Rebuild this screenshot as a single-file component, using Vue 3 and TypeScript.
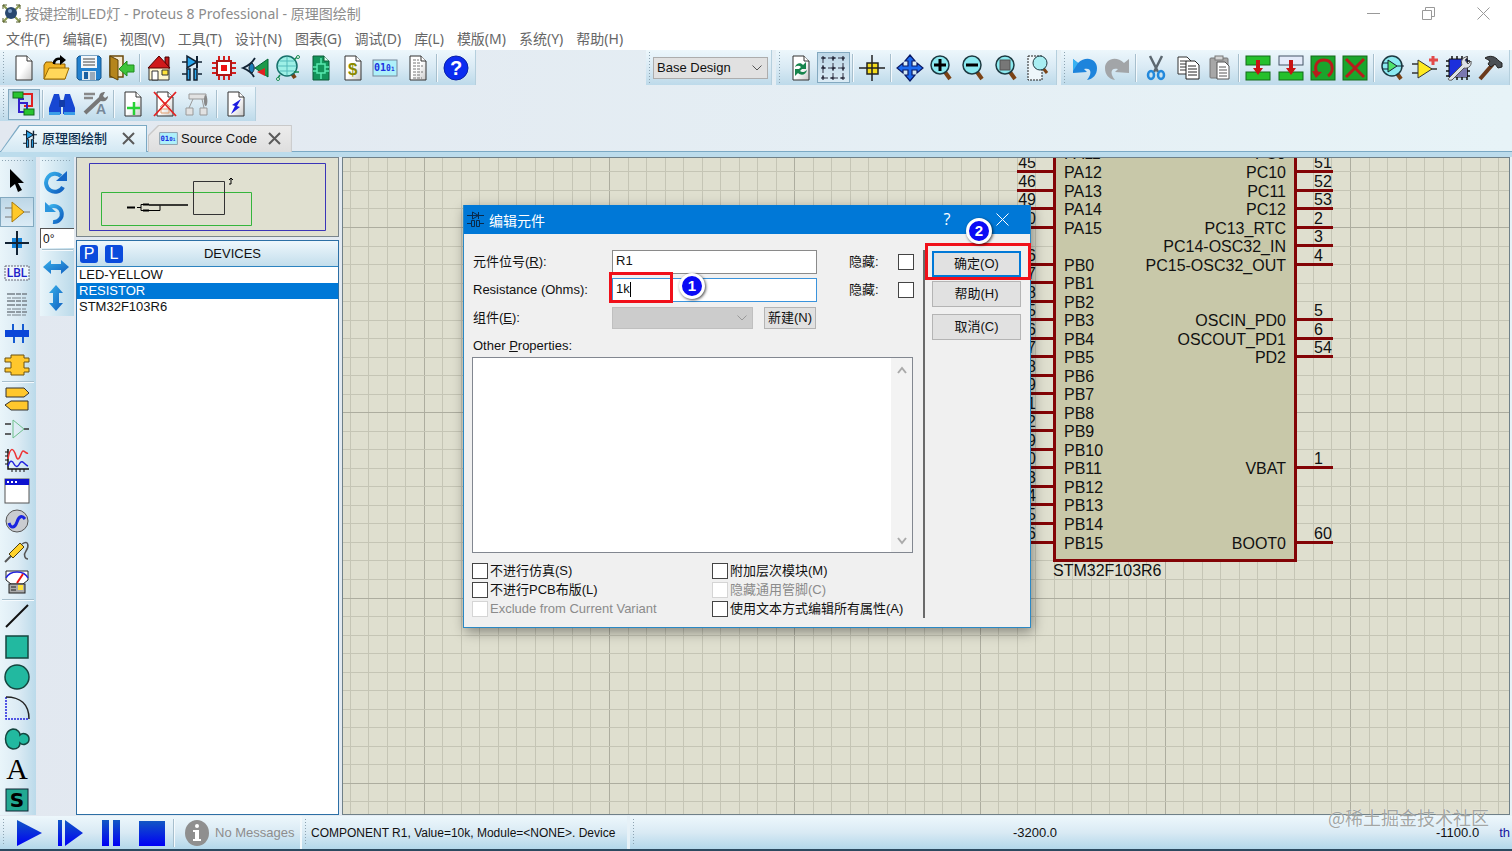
<script setup lang="ts">
import { ref } from 'vue'

interface Tool {
  name: string
  art?: string
  active?: boolean
  sep?: boolean
}

const page = '<path d="M5 1h11l5 5v19H5z" fill="url(#paper)" stroke="#333"/><path d="M16 1v5h5" fill="#fff" stroke="#333"/>'
const part = '<path d="M3 7h20M3 19h5M19 19h4" stroke="#123" stroke-width="1.5"/><path d="M8 1v12l10-6z" fill="#29a5ec" stroke="#123" stroke-width="1.5"/><path d="M18 1v12" stroke="#123" stroke-width="2"/><path d="M8 14h3v11H8zM15 14h3v11h-3z" fill="#29a5ec" stroke="#123" stroke-width="1.5"/>'
const code = '<rect x="1" y="5" width="24" height="16" fill="#aef0fa" stroke="#789"/><text x="2" y="16" font-family="DejaVu Sans Mono" font-weight="bold" font-size="10" fill="#1b32e0">01<tspan font-size="8">0</tspan><tspan font-size="6">1</tspan></text>'
const lens = '<path d="M16 17l5 7" stroke="#7b4316" stroke-width="4"/><circle cx="11" cy="10" r="9" fill="#8beaf0" stroke="#1d3a42" stroke-width="1.5"/>'
const chipGreen = '<rect x="1" y="1" width="24" height="24" fill="#1aa52c" stroke="#126a1b"/>'

const mainTools: Tool[] = [
  { name: 'New', art: page },
  { name: 'Open', art: '<path d="M1 10V24h21V9H11L9 7H3z" fill="#f0b323" stroke="#8a5a00"/><path d="M1 24l5-11h20l-4 11z" fill="#ffd75a" stroke="#9a6a00"/><path d="M11 9c0-4 3-6 7-5" fill="none" stroke="#000" stroke-width="2.5"/><path d="M17 0l6 5-6 5z"/>' },
  { name: 'Save', art: '<path d="M1 3l2-2h20l2 2v20l-2 2H3l-2-2z" fill="#2381cf" stroke="#15568e"/><rect x="5" y="1" width="16" height="12" fill="#f4f8fb"/><path d="M7 4h12M7 7h12M7 10h12" stroke="#444"/><rect x="6" y="16" width="14" height="9" fill="#dfe8ee"/><rect x="8" y="17" width="4" height="7" fill="#1b5fa0"/><path d="M14 17h5v8h-5z" fill="#9ab"/>' },
  { name: 'Close project', art: '<path d="M2 1h13v21H2z" fill="#f5ead0" stroke="#6b4a0a" stroke-width="1.5"/><path d="M2 1l8 4v20l-8-4z" fill="#b5851d" stroke="#5d420c"/><path d="M26 10v7h-7v4l-8-7 8-8v4z" fill="#3ec43a" stroke="#1f8d1e"/>' },
  { name: 's1', sep: true },
  { name: 'Home', art: '<path d="M19 9V2h4v10" fill="#c01818" stroke="#400"/><path d="M3 12h20v13H3z" fill="#fff6cf" stroke="#333"/><path d="M13 1L2 13h22z" fill="#d01a1a" stroke="#500"/><path d="M6 16h6v9H6z" fill="#fff" stroke="#333"/><path d="M16 15h6v5h-6z" fill="#ffe23a" stroke="#333"/>' },
  { name: 'Schematic', art: part },
  { name: 'PCB', art: '<path d="M8 1v24M13 1v24M18 1v24M1 8h24M1 13h24M1 18h24" stroke="#d3201f" stroke-width="2"/><rect x="6" y="6" width="14" height="14" fill="#fff" stroke="#b01515" stroke-width="2"/><rect x="10" y="10" width="6" height="6" fill="#e11"/>' },
  { name: '3D viewer', art: '<path d="M12 3C9 8 5 11 0 13c5 2 9 5 11 9" fill="none" stroke="#123" stroke-width="1.8"/><path d="M9 8c3 3 3 7 0 10-4-2-4-8 0-10z" fill="#1b7cb8" stroke="#123"/><path d="M12 13L25 4v18z" fill="#1e9a4a" stroke="#063"/><path d="M14 17l8-4v8z" fill="#e02222"/>' },
  { name: 'Gerber', art: '<path d="M16 17l4 6" stroke="#7b4316" stroke-width="4"/><circle cx="12" cy="11" r="10" fill="#9df0e6" stroke="#16706b" stroke-width="1.5"/><path d="M3 11h18M12 2v18M5 6h14M5 16h14" stroke="#5bb" fill="none"/><path d="M19 5l3-3M19 17h5M5 20l-2 3" stroke="#178a50" stroke-width="1.5"/><circle cx="23" cy="2" r="1.5" fill="#fff" stroke="#178a50"/><circle cx="3" cy="24" r="1.5" fill="#fff" stroke="#178a50"/>' },
  { name: 'Design explorer', art: '<path d="M5 1h11l5 5v19H5z" fill="#12945a" stroke="#0c5a38"/><path d="M16 1v5h5" fill="#e0fff0" stroke="#0c5a38"/><path d="M9 9h8v9H9zM13 9V3M13 18v6M9 12H5M9 16H5M17 12h4M17 16h4" fill="none" stroke="#59e8b0" stroke-width="1.5"/>' },
  { name: 'Bill of materials', art: page + '<text x="8" y="20" font-family="Liberation Sans" font-weight="bold" font-size="17" fill="#8a8a00">$</text>' },
  { name: 'Source', art: code },
  { name: 'Notes', art: page + '<path d="M8 5h6M8 8h7M8 11h10M8 14h8M8 17h10M8 20h7M8 23h9" stroke="#777" stroke-dasharray="3 1"/>' },
  { name: 's2', sep: true },
  { name: 'Help', art: '<circle cx="13" cy="13" r="12" fill="#0b2cf0" stroke="#0820a8"/><text x="13" y="20" text-anchor="middle" font-family="Liberation Sans" font-weight="bold" font-size="20" fill="#fff">?</text>' },
]

const viewTools: Tool[] = [
  { name: 'Redraw', art: page + '<path d="M7 12c1-4 6-5 8-2l3-3v7h-7l2-2c-2-2-4-1-6 0zM19 15c-1 5-6 6-9 3l-3 3v-7h7l-2 2c2 2 5 1 7-1z" fill="#16844c"/>' },
  { name: 'Grid', active: true, art: '<path d="M3 3h20v20H3zM13 3v20M3 13h20" fill="none" stroke="#334" stroke-dasharray="3 2"/><path d="M1 3h4M11 3h4M21 3h4M1 13h4M11 13h4M21 13h4M1 23h4M11 23h4M21 23h4M3 1v4M13 1v4M23 1v4M3 11v4M13 11v4M23 11v4M3 21v4M13 21v4M23 21v4" stroke="#112"/>' },
  { name: 's1', sep: true },
  { name: 'Origin', art: '<rect x="8" y="8" width="11" height="11" fill="#f5dc1b" stroke="#222" stroke-width="1.5"/><path d="M13 0v26M0 13h26" stroke="#222" stroke-width="1.5"/>' },
  { name: 's2', sep: true },
  { name: 'Pan', art: '<path d="M13 0l5 6h-3v5h5V8l6 5-6 5v-3h-5v5h3l-5 6-5-6h3v-5H6v3l-6-5 6-5v3h5V6H8z" fill="#1d6af0" stroke="#0a1a66" stroke-width="1.2"/>' },
  { name: 'Zoom in', art: lens + '<path d="M5 10h12M11 4v12" stroke="#000" stroke-width="3"/>' },
  { name: 'Zoom out', art: lens + '<path d="M5 10h12" stroke="#000" stroke-width="3"/>' },
  { name: 'Zoom all', art: lens + '<rect x="6" y="5" width="10" height="10" fill="#777" stroke="#555"/>' },
  { name: 'Zoom area', art: '<path d="M2 1h14v24H2z" fill="#eef6fa" stroke="#222" stroke-dasharray="2 1"/><path d="M17 13l4 5" stroke="#7b4316" stroke-width="3"/><circle cx="14" cy="8" r="7" fill="#a8eef2" stroke="#1d3a42"/>' },
]

const editTools: Tool[] = [
  { name: 'Undo', art: '<path d="M1 4l5 4c8-8 19-4 19 5 0 7-4 11-10 12 5-6 5-13-3-11l3 3L1 18z" fill="#1d84dc"/><path d="M1 4l5 4-5 8z" fill="#38b2f2"/>' },
  { name: 'Redo', art: '<path d="M25 4l-5 4C12 0 1 4 1 13c0 7 4 11 10 12-5-6-5-13 3-11l-3 3 14 1z" fill="#a2a5a8"/>' },
  { name: 's1', sep: true },
  { name: 'Cut', art: '<path d="M7 1l8 16M19 1l-8 16" stroke="#5d6870" stroke-width="2.5"/><ellipse cx="8" cy="20" rx="3" ry="4" fill="none" stroke="#2389dc" stroke-width="2.5"/><ellipse cx="18" cy="20" rx="3" ry="4" fill="none" stroke="#2389dc" stroke-width="2.5"/>' },
  { name: 'Copy', art: '<path d="M3 2h9l4 4v13H3z" fill="#fff" stroke="#333"/><path d="M5 6h6M5 9h7M5 12h6M5 15h7" stroke="#333"/><path d="M11 6h9l4 4v14H11z" fill="#fff" stroke="#222"/><path d="M13 11h8M13 14h9M13 17h9M13 20h9" stroke="#222"/>' },
  { name: 'Paste', art: '<rect x="3" y="3" width="18" height="20" rx="1" fill="#a7a7a7" stroke="#777"/><rect x="8" y="1" width="8" height="4" fill="#d5d5d5" stroke="#777"/><path d="M10 7h8l4 4v13H10z" fill="#fff" stroke="#555"/><path d="M12 12h7M12 15h8M12 18h8M12 21h8" stroke="#555"/>' },
  { name: 's2', sep: true },
  { name: 'Block copy', art: '<rect x="1" y="1" width="24" height="9" fill="#25c02c" stroke="#126a1b"/><rect x="1" y="17" width="24" height="8" fill="#25c02c" stroke="#126a1b"/><path d="M13 5v9" stroke="#c81414" stroke-width="4"/><path d="M8 13h10l-5 7z" fill="#c81414"/>' },
  { name: 'Block move', art: '<rect x="1" y="1" width="24" height="9" fill="#e4ebfa" stroke="#456"/><rect x="1" y="17" width="24" height="8" fill="#25c02c" stroke="#126a1b"/><path d="M13 5v9" stroke="#c81414" stroke-width="4"/><path d="M8 13h10l-5 7z" fill="#c81414"/>' },
  { name: 'Block rotate', art: chipGreen + '<path d="M18 21c7-5 5-16-4-16-8 0-10 7-7 13" fill="none" stroke="#b81c1c" stroke-width="3"/><path d="M2 16l10 1-6 6z" fill="#b81c1c"/>' },
  { name: 'Block delete', art: chipGreen + '<path d="M4 4l18 18M22 4L4 22" stroke="#b81c1c" stroke-width="3"/>' },
  { name: 's3', sep: true },
  { name: 'Pick parts', art: '<path d="M16 17l5 7" stroke="#7b4316" stroke-width="4"/><circle cx="12" cy="11" r="10" fill="#8beaf0" stroke="#1d3a42" stroke-width="1.5"/><path d="M2 8h6M2 14h6M17 11h7" stroke="#123"/><path d="M8 5v12l9-6z" fill="#4de36a" stroke="#123"/>' },
  { name: 'Make device', art: '<path d="M0 9h6M0 18h6M18 14h7" stroke="#333" stroke-width="1.5"/><path d="M6 5v18l14-9z" fill="#ffea20" stroke="#333"/><path d="M17 5h9M21 1v9" stroke="#e24a4a" stroke-width="3"/>' },
  { name: 'Packaging', art: '<path d="M7 1v24M12 1v24M17 1v24M22 1v24M1 6h24M1 11h24M1 16h24M1 21h24" stroke="#111" stroke-width="1.5"/><path d="M4 4h18v18H4z" fill="#1c2fdc" stroke="#111"/><path d="M22 8v14H8z" fill="#7a78b0"/><path d="M4 23l13-13c-2-5 2-9 6-8l-3 3 3 4 3-3c1 5-3 8-7 7L7 25c-3 1-5-1-3-2z" fill="#dde1e6" stroke="#555"/>' },
  { name: 'Decompose', art: '<path d="M3 24L16 9" stroke="#6b3a1c" stroke-width="4"/><path d="M8 3c5-3 10-2 14 3l3 2v4l-4 1-3-4-4 3-3-3 2-3c-2-1-3-2-5-3z" fill="#4a4f54" stroke="#222"/>' },
]

const designTools: Tool[] = [
  { name: 'Wire autorouter', active: true, art: '<path d="M12 3h9v12h-8" fill="none" stroke="#e02020" stroke-width="2"/><path d="M13 8H8v13h6M16 18v-6h-7" fill="none" stroke="#3322cc" stroke-width="2"/><rect x="2" y="1" width="10" height="6" fill="#28c430" stroke="#126a1b"/><rect x="13" y="18" width="10" height="6" fill="#28c430" stroke="#126a1b"/>' },
  { name: 's1', sep: true },
  { name: 'Search', art: '<path d="M5 3h5l2 8v12H0v-6zM21 3h-5l-2 8v12h12v-6z" fill="#1747d2"/><path d="M10 9h6v7h-6z" fill="#123ba8"/><path d="M0 21h11v3H0zM15 21h11v3H15z" fill="#3a9de8"/>' },
  { name: 'Properties', art: '<path d="M2 3h11M2 7h9" stroke="#888" stroke-width="2.5"/><path d="M3 22L19 7" stroke="#777" stroke-width="4"/><path d="M17 7c0-4 2-6 6-6l-2 4 2 2 3-2c0 4-3 6-7 5z" fill="#777"/><text x="14" y="23" font-family="Liberation Sans" font-weight="bold" font-size="14" fill="#789">A</text>' },
  { name: 's2', sep: true },
  { name: 'New sheet', art: page + '<path d="M7 17h13M14 11v13" stroke="#27d235" stroke-width="2.5"/>' },
  { name: 'Remove sheet', art: page + '<path d="M8 16l5-5 5 5M9 18h8v4H9z" fill="none" stroke="#e4a070"/><path d="M2 1l22 24M24 1L2 25" stroke="#e32222" stroke-width="1.8"/>' },
  { name: 'Parent sheet', art: '<path d="M4 3h17v5H4zM1 17h7v7H1zM15 17h7v7h-7zM8 8l-4 9M17 8l2 9" fill="#e2e2e2" stroke="#999"/><path d="M20 4c3 0 3 10 1 11s-3-7-1-11z" fill="#888"/>' },
  { name: 's3', sep: true },
  { name: 'Electrical check', art: page + '<path d="M18 8l-9 6 3 1-4 8 9-7-3-1z" fill="#1c1ce0"/>' },
]

const modes: Tool[] = [
  { name: 'Selection', art: '<path d="M6 1v19l5-4 3 8 4-2-4-7h6z"/>' },
  { name: 'Component', active: true, art: '<path d="M1 9h7M1 18h7M20 13h6" stroke="#777"/><path d="M8 3v20l12-10z" fill="#ffc92a" stroke="#a77a10"/>' },
  { name: 'Junction', art: '<rect x="8" y="8" width="10" height="10" fill="#1583d8"/><path d="M13 1v24M1 13h24" stroke="#123" stroke-width="2"/>' },
  { name: 'Wire label', art: '<rect x="1" y="6" width="24" height="14" fill="#edf6fc" stroke="#667" stroke-dasharray="2 1"/><text x="13" y="17" text-anchor="middle" font-family="Roboto" font-weight="500" font-size="12" fill="#1d22c8">LBL</text>' },
  { name: 'Text script', art: '<path d="M3 3h20M3 10h20M3 14h20M3 21h20" stroke="#778088" stroke-width="1.5" stroke-dasharray="8 1 5 1"/><path d="M3 7h20M3 18h20M3 24h20" stroke="#778088" stroke-dasharray="4 1 9 1"/>' },
  { name: 'Bus', art: '<path d="M9 3v10M19 3v10M10 13v9M19 13v9" stroke="#155bd2" stroke-width="2"/><rect x="1" y="9" width="24" height="7" fill="#0b46d8"/>' },
  { name: 'Subcircuit', art: '<path d="M1 6h6V3h13v3h5v4h-5v6h5v4h-5v3H7v-3H1v-4h6v-6H1z" fill="#ffc72c" stroke="#6d5310"/>' },
  { name: 's1', sep: true },
  { name: 'Terminal', art: '<path d="M2 2h18l5 5-5 4H2zM24 15H7l-6 4 6 5h17z" fill="#ffc72c" stroke="#333"/>' },
  { name: 'Device pin', art: '<path d="M9 4v18l11-9z" fill="none" stroke="#6fc08d"/><path d="M1 8h6M1 18h6M20 13h5" stroke="#333" stroke-width="1.5"/>' },
  { name: 'Graph', art: '<path d="M4 2v20h21" fill="none" stroke="#111" stroke-width="1.5"/><path d="M1 5h3M1 9h3M1 13h3M1 17h3M8 22v3M12 22v3M16 22v3M20 22v3" stroke="#111"/><path d="M4 12c2-12 5-12 8-3s5-5 7-5 3 3 5 2" fill="none" stroke="#e33" stroke-width="1.5"/><path d="M4 19c2-6 4-6 6-2s4 3 6-1 5 2 8 3" fill="none" stroke="#22d" stroke-width="1.5"/>' },
  { name: 'Popup', art: '<rect x="1" y="1" width="24" height="24" fill="#fff" stroke="#555"/><rect x="1" y="1" width="24" height="6" fill="#0d12cf"/><path d="M3 4h2M7 4h2M11 4h2" stroke="#fff" stroke-width="2"/>' },
  { name: 'Generator', art: '<circle cx="13" cy="13" r="11" fill="#c9ccd0" stroke="#555"/><path d="M5 15c2 6 6 5 8-1s5-7 8-3" fill="none" stroke="#1a25e0" stroke-width="3"/>' },
  { name: 'Probe', art: '<path d="M1 23l6-6" stroke="#555" stroke-width="2"/><path d="M5 15L16 4l4 4L9 19z" fill="#ffd22c" stroke="#4d3f10"/><path d="M18 5c7-5 7 3 4 7s-1 8 2 8" fill="none" stroke="#555" stroke-width="1.5"/>' },
  { name: 'Instrument', art: '<path d="M2 2h22v9l-5 4H7l-5-4z" fill="#fff" stroke="#222"/><path d="M2 9c4-8 18-8 22 0" fill="none" stroke="#22d" stroke-width="1.5"/><path d="M13 14l6-9" stroke="#e11" stroke-width="2"/><rect x="5" y="15" width="16" height="9" fill="#aaa" stroke="#222"/><path d="M7 18h5M7 21h5" stroke="#222"/><rect x="14" y="16" width="5" height="5" fill="#ffe23a"/>' },
  { name: 's2', sep: true },
  { name: 'Line', art: '<path d="M2 24L24 2" stroke="#111" stroke-width="2"/>' },
  { name: 'Box', art: '<rect x="2" y="2" width="22" height="22" fill="#22b9a0" stroke="#14463f" stroke-width="1.5"/>' },
  { name: 'Circle', art: '<circle cx="13" cy="13" r="12" fill="#22b9a0" stroke="#14463f" stroke-width="1.5"/>' },
  { name: 'Arc', art: '<path d="M2 2v22h23" fill="none" stroke="#22d" stroke-width="1.5" stroke-dasharray="2 1"/><path d="M2 2c14 0 23 7 23 22" fill="none" stroke="#222" stroke-width="1.5"/>' },
  { name: 'Path', art: '<path d="M9 3c5 0 7 4 7 6 3-3 9-1 9 4s-6 7-9 4c0 3-2 6-7 6-10-1-10-19 0-20z" fill="#22b9a0" stroke="#14463f" stroke-width="1.5"/>' },
  { name: 'Text', art: '<text x="13" y="23" text-anchor="middle" font-family="Liberation Serif" font-size="30">A</text>' },
  { name: 'Symbol', art: '<rect x="2" y="2" width="22" height="22" fill="#22a992" stroke="#123"/><text x="13" y="20" text-anchor="middle" font-family="DejaVu Sans" font-weight="bold" font-size="20">S</text>' },
]

const menus = ['文件(F)', '编辑(E)', '视图(V)', '工具(T)', '设计(N)', '图表(G)', '调试(D)', '库(L)', '模版(M)', '系统(Y)', '帮助(H)']
const devices = ['LED-YELLOW', 'RESISTOR', 'STM32F103R6']
const selected = ref('RESISTOR')
const design = ref('Base Design')
const angle = ref('0°')
const reference = ref('R1')
const resistance = ref('1k')
const otherProps = ref('')

const flags = [
  { id: 'sim', label: '不进行仿真(S)', off: false },
  { id: 'hier', label: '附加层次模块(M)', off: false },
  { id: 'pcb', label: '不进行PCB布版(L)', off: false },
  { id: 'pins', label: '隐藏通用管脚(C)', off: true },
  { id: 'variant', label: 'Exclude from Current Variant', off: true },
  { id: 'astext', label: '使用文本方式编辑所有属性(A)', off: false },
]

/* Schematic geometry: one grid step between neighbouring pins. */
const STEP = 18.525
const at = (base: number, k: number) => Math.round(base + k * STEP)
const columns = Array.from({ length: 140 }, (_, i) => i - 54).map(k => ({ p: at(1007, k), major: k % 10 === 0 }))
const rows = Array.from({ length: 80 }, (_, i) => i - 3).map(k => ({ p: at(69, k), major: k % 10 === 0 }))

const leftPins: [number, string, string][] = [
  [-1, '', 'PA11'], [0, '45', 'PA12'], [1, '46', 'PA13'], [2, '49', 'PA14'], [3, '50', 'PA15'],
  [5, '26', 'PB0'], [6, '27', 'PB1'], [7, '28', 'PB2'], [8, '55', 'PB3'], [9, '56', 'PB4'], [10, '57', 'PB5'],
  [11, '58', 'PB6'], [12, '59', 'PB7'], [13, '61', 'PB8'], [14, '62', 'PB9'], [15, '29', 'PB10'], [16, '30', 'PB11'],
  [17, '33', 'PB12'], [18, '34', 'PB13'], [19, '35', 'PB14'], [20, '36', 'PB15'],
]
const rightPins: [number, string, string][] = [
  [-1, '', 'PC9'], [0, '51', 'PC10'], [1, '52', 'PC11'], [2, '53', 'PC12'], [3, '2', 'PC13_RTC'],
  [4, '3', 'PC14-OSC32_IN'], [5, '4', 'PC15-OSC32_OUT'], [8, '5', 'OSCIN_PD0'], [9, '6', 'OSCOUT_PD1'],
  [10, '54', 'PD2'], [16, '1', 'VBAT'], [20, '60', 'BOOT0'],
]
</script>

<template>
  <div class="app">
    <svg class="defs" width="0" height="0" aria-hidden="true">
      <defs>
        <linearGradient id="paper" x1="0" y1="0" x2="1" y2="1"><stop offset=".5" stop-color="#fff" /><stop offset="1" stop-color="#c8c8c8" /></linearGradient>
        <linearGradient id="run" x1="0" y1="0" x2="0" y2="1"><stop offset="0" stop-color="#1257c4" /><stop offset="1" stop-color="#0000f5" /></linearGradient>
        <linearGradient id="flip" x1="0" y1="0" x2="1" y2="1"><stop offset="0" stop-color="#38b0ea" /><stop offset="1" stop-color="#0f5fc0" /></linearGradient>
      </defs>
    </svg>

    <header class="titlebar">
      <svg width="19" height="19" viewBox="0 0 19 19" aria-hidden="true">
        <path d="M1 1l17 17M18 1L1 18" stroke="#8b9a50" stroke-width="2" />
        <circle cx="9" cy="9" r="6" fill="#28476f" /><circle cx="8" cy="7" r="2" fill="#7fa0c8" />
        <path d="M1 5V1h4M14 1h4v4M1 14v4h4M18 14v4h-4" fill="none" stroke="#555f30" />
      </svg>
      <h1>按键控制LED灯 - Proteus 8 Professional - 原理图绘制</h1>
      <div class="win">
        <button aria-label="Minimize"><svg width="13" height="13"><path d="M0 6.500h13" stroke="#999" /></svg></button>
        <button aria-label="Restore"><svg width="13" height="13" fill="none" stroke="#999"><path d="M.5 3.500h9v9h-9zM3.500 3V.5h9v9H10" /></svg></button>
        <button aria-label="Close"><svg width="13" height="13" stroke="#999"><path d="M.5.5l12 12M12.500.5l-12 12" /></svg></button>
      </div>
    </header>

    <nav class="menubar">
      <button v-for="m in menus" :key="m">{{ m }}</button>
    </nav>

    <div class="bars">
      <div class="bar main" role="toolbar" aria-label="Project">
        <template v-for="t in mainTools" :key="t.name">
          <i v-if="t.sep" class="sep"></i>
          <button v-else class="tool" :aria-label="t.name"><svg viewBox="0 0 26 26" fill="#000" v-html="t.art"></svg></button>
        </template>
      </div>
      <div class="bar combo">
        <div class="pick">
          <select v-model="design" aria-label="Variant"><option>Base Design</option></select>
          <svg width="10" height="6" fill="none" stroke="#555"><path d="M.5.5L5 5 9.500.5" /></svg>
        </div>
      </div>
      <div class="bar view" role="toolbar" aria-label="View">
        <template v-for="t in viewTools" :key="t.name">
          <i v-if="t.sep" class="sep"></i>
          <button v-else class="tool" :class="{ active: t.active }" :aria-label="t.name"><svg viewBox="0 0 26 26" v-html="t.art"></svg></button>
        </template>
      </div>
      <div class="bar edit" role="toolbar" aria-label="Edit">
        <template v-for="t in editTools" :key="t.name">
          <i v-if="t.sep" class="sep"></i>
          <button v-else class="tool" :aria-label="t.name"><svg viewBox="0 0 26 26" v-html="t.art"></svg></button>
        </template>
      </div>
    </div>
    <div class="bars second">
      <div class="bar design" role="toolbar" aria-label="Design">
        <template v-for="t in designTools" :key="t.name">
          <i v-if="t.sep" class="sep"></i>
          <button v-else class="tool" :class="{ active: t.active }" :aria-label="t.name"><svg viewBox="0 0 26 26" v-html="t.art"></svg></button>
        </template>
      </div>
    </div>

    <div class="tabs">
      <div class="tab on">
        <svg width="18" height="20" viewBox="0 0 26 26" v-html="part"></svg>
        <button class="name">原理图绘制</button>
        <button class="x" aria-label="Close tab"><svg width="13" height="13" stroke="#5a5a5a" stroke-width="2"><path d="M1 1l11 11M12 1L1 12" /></svg></button>
      </div>
      <div class="tab">
        <svg width="19" height="19" viewBox="0 0 26 26" v-html="code"></svg>
        <button class="name">Source Code</button>
        <button class="x" aria-label="Close tab"><svg width="13" height="13" stroke="#5a5a5a" stroke-width="2"><path d="M1 1l11 11M12 1L1 12" /></svg></button>
      </div>
    </div>

    <main class="work">
      <div class="modes" role="toolbar" aria-label="Modes">
        <template v-for="t in modes" :key="t.name">
          <i v-if="t.sep" class="hsep"></i>
          <button v-else class="tool" :class="{ active: t.active }" :aria-label="t.name"><svg viewBox="0 0 26 26" v-html="t.art"></svg></button>
        </template>
      </div>

      <div class="orient">
        <button aria-label="Rotate clockwise"><svg width="24" height="24"><path d="M19 17a9 9 0 1 1-2-11" fill="none" stroke="url(#flip)" stroke-width="4" /><path d="M23 1v10H12z" fill="#1668c8" /></svg></button>
        <button aria-label="Rotate anticlockwise"><svg width="24" height="24"><path d="M6 6a8 8 0 1 1 3 15" fill="none" stroke="url(#flip)" stroke-width="4" /><path d="M1 1v10h11z" fill="#2b96de" /></svg></button>
        <input v-model="angle" aria-label="Angle" />
        <i class="hsep"></i>
        <button aria-label="Mirror horizontally"><svg width="26" height="14"><path d="M0 7l8-7v4h10V0l8 7-8 7v-4H8v4z" fill="url(#flip)" /></svg></button>
        <button aria-label="Mirror vertically"><svg width="14" height="26"><path d="M7 0l7 8h-4v10h4l-7 8-7-8h4V8H0z" fill="url(#flip)" /></svg></button>
      </div>

      <aside class="side">
        <div class="preview">
          <svg viewBox="0 0 261 78" fill="none" aria-hidden="true">
            <path d="M12.500 5.500h236v67h-236z" stroke="#3a35b8" />
            <path d="M24.500 34.500h150v33h-150z" stroke="#35b53c" />
            <path d="M116.500 23.500h31v33h-31z" stroke="#333" />
            <path d="M50 49.500h8M66 46.500h6M66 52.500h6" stroke="#000" stroke-width="2" />
            <path d="M60 49.500h4M66 46.500h-2v6h2M72 52.500h11v-5" stroke="#000" />
            <path d="M72 47h39" stroke="#000" stroke-width="1.500" />
            <path d="M152 26h2v-5M152 22l2-2 2 2" stroke="#000" />
          </svg>
        </div>
        <section class="devices">
          <div class="dhead">
            <button>P</button><button>L</button><h2>DEVICES</h2>
          </div>
          <ul>
            <li v-for="d in devices" :key="d"><button :class="{ on: d === selected }" @click="selected = d">{{ d }}</button></li>
          </ul>
        </section>
      </aside>

      <div class="canvas">
        <svg width="100%" height="100%" shape-rendering="crispEdges">
          <line v-for="c in columns" :key="'c' + c.p" :x1="c.p" :x2="c.p" y1="0" y2="1500" transform="translate(.5 0)" :stroke="c.major ? '#adad9f' : '#c5c5b5'" />
          <line v-for="r in rows" :key="'r' + r.p" :y1="r.p" :y2="r.p" x1="0" x2="2600" transform="translate(0 .5)" :stroke="r.major ? '#adad9f' : '#c5c5b5'" />
          <rect x="711" y="-20" width="241" height="422" fill="#c8c8a9" stroke="#830406" stroke-width="3" />
          <g v-for="[k, num, label] in leftPins" :key="label">
            <rect x="674" :y="at(12, k)" width="37" height="3" fill="#830406" />
            <text v-if="num" x="693" :y="at(10, k)" text-anchor="end">{{ num }}</text>
            <text x="721" :y="at(20, k)">{{ label }}</text>
          </g>
          <g v-for="[k, num, label] in rightPins" :key="label">
            <rect x="952" :y="at(12, k)" width="38" height="3" fill="#830406" />
            <text v-if="num" x="971" :y="at(10, k)">{{ num }}</text>
            <text x="943" :y="at(20, k)" text-anchor="end">{{ label }}</text>
          </g>
          <text x="710" y="418">STM32F103R6</text>
        </svg>
      </div>
    </main>

    <footer class="status">
      <div class="run">
        <button aria-label="Play"><svg width="26" height="26"><path d="M1 0l25 13L1 26z" fill="url(#run)" /></svg></button>
        <button aria-label="Step"><svg width="26" height="26"><path d="M1 0h4v26H1zM8 0l18 13L8 26z" fill="url(#run)" /></svg></button>
        <button aria-label="Pause"><svg width="26" height="26"><path d="M4 0h7v26H4zM15 0h7v26h-7z" fill="url(#run)" /></svg></button>
        <button aria-label="Stop"><svg width="26" height="26"><path d="M0 1h26v25H0z" fill="url(#run)" /></svg></button>
        <i class="sep"></i>
        <svg width="24" height="26" viewBox="0 0 24 26" aria-hidden="true"><ellipse cx="12" cy="13" rx="12" ry="13" fill="#8f8f8f" /><circle cx="12" cy="6" r="2" fill="#fff" /><path d="M8 10h6v9h2v2H8v-2h2v-7H8z" fill="#fff" /></svg>
        <span>No Messages</span>
      </div>
      <div class="msg">COMPONENT R1, Value=10k, Module=&lt;NONE&gt;. Device</div>
      <div class="coords"><span>-3200.0</span><span>-1100.0</span><b>th</b></div>
    </footer>

    <div class="mark">@稀土掘金技术社区</div>

    <form class="dialog" role="dialog" aria-labelledby="dlg" @submit.prevent>
      <div class="dtitle">
        <svg width="17" height="17" viewBox="0 0 17 17" fill="none" stroke="#0a2a4c"><path d="M0 4.500h17M5.500 1v7l6-3.500zM11.500 1v7M0 12.500h4.500M12.500 12.500H17M4.500 9.500h3v6h-3zM9.500 9.500h3v6h-3z" /></svg>
        <h2 id="dlg">编辑元件</h2>
        <button type="button" aria-label="Help">?</button>
        <button type="button" aria-label="Close"><svg width="13" height="13" stroke="#fff"><path d="M.5.5l12 12M12.500.5l-12 12" /></svg></button>
      </div>
      <div class="dbody">
        <div class="fields">
          <div class="grid">
            <label for="ref">元件位号(<u>R</u>):</label>
            <input id="ref" v-model="reference" />
            <label class="hide">隐藏: <input type="checkbox" /></label>
            <label for="res">Resistance (Ohms):</label>
            <div class="hot">
              <input id="res" v-model="resistance" class="focus" />
              <i class="caret"></i>
              <i class="box"></i>
              <span class="badge">1</span>
            </div>
            <label class="hide">隐藏: <input type="checkbox" /></label>
            <label for="elem">组件(<u>E</u>):</label>
            <div class="pair">
              <div class="pick off">
                <select id="elem" disabled><option></option></select>
                <svg width="10" height="6" fill="none" stroke="#999"><path d="M.5.5L5 5 9.500.5" /></svg>
              </div>
              <button type="button" class="push">新建(N)</button>
            </div>
          </div>
          <label for="other" class="olabel">Other <u>P</u>roperties:</label>
          <div class="memo">
            <textarea id="other" v-model="otherProps"></textarea>
            <div class="scroll">
              <button type="button" aria-label="Scroll up"><svg width="10" height="8" fill="none" stroke="#aaa" stroke-width="2"><path d="M1 7l4-5 4 5" /></svg></button>
              <button type="button" aria-label="Scroll down"><svg width="10" height="8" fill="none" stroke="#aaa" stroke-width="2"><path d="M1 1l4 5 4-5" /></svg></button>
            </div>
          </div>
          <div class="flags">
            <label v-for="f in flags" :key="f.id" :class="{ off: f.off }"><input type="checkbox" :disabled="f.off" />{{ f.label }}</label>
          </div>
        </div>
        <div class="actions">
          <div class="ok">
            <button type="submit" class="push default">确定(O)</button>
            <i class="box"></i>
            <span class="badge">2</span>
          </div>
          <button type="button" class="push">帮助(H)</button>
          <button type="button" class="push">取消(C)</button>
        </div>
      </div>
    </form>
  </div>
</template>

<style>
body { overflow: hidden; }
</style>

<style scoped>
.app {
  position: relative;
  display: flex;
  flex-direction: column;
  height: 100vh;
  background: linear-gradient(90deg, #e2e8f0, #e7f3f7);
  font: 13px/16px "Liberation Sans", "Noto Sans CJK SC", sans-serif;
  color: #111;
  overflow: hidden;
}
.app *, .app *::before, .app *::after { box-sizing: border-box; }
.defs { position: absolute; }
button, input, select, textarea { font: inherit; color: inherit; margin: 0; padding: 0; border: 0; border-radius: 0; background: none; outline: 0; }
h1, h2 { margin: 0; font-weight: 400; }
svg { display: block; flex: none; }

.titlebar { display: flex; align-items: center; gap: 4px; height: 27px; padding: 0 1px 0 2px; background: #fff; flex: none; }
.titlebar h1 { font: 14px/20px "Noto Sans", "Noto Sans CJK SC", sans-serif; color: #8c8c8c; }
.win { display: flex; margin-left: auto; }
.win button { display: grid; place-items: center; width: 55px; height: 27px; }

.menubar { display: flex; gap: 13px; height: 23px; padding: 0 6px; background: #fff; flex: none; }
.menubar button { font: 14px/22px "Noto Sans", "Noto Sans CJK SC", sans-serif; color: #666; white-space: nowrap; }

.bars { display: flex; gap: 4px; height: 35px; padding-right: 2px; flex: none; }
.bars.second { margin-top: 2px; height: 34px; }
.bar {
  position: relative;
  display: flex;
  align-items: center;
  padding: 0 3px 0 8px;
  background: linear-gradient(#edf7fc, #d9eaf4 50%, #bddaea);
  border-right: 1px solid #b5cfdd;
}
.bar::before {
  content: "";
  position: absolute;
  left: 3px; top: 2px; bottom: 2px;
  width: 1px;
  background: repeating-linear-gradient(#8da4b2 0 1px, transparent 1px 3px);
}
.main { width: 476px; }
.combo { width: 126px; margin-left: auto; }
.view { width: 281px; padding: 0 1px 0 9px; }
.edit { width: 449px; }
.design { width: 256px; }
.tool { display: grid; place-items: center; flex: 1 1 0; min-width: 0; min-height: 0; height: 31px; }
.tool svg { width: 26px; height: 26px; overflow: visible; }
.tool.active { background: linear-gradient(#bcd6e6, #dcecf6); box-shadow: inset 0 0 0 1px #83a9c0; }
.sep { width: 2px; height: 28px; margin: 0 2px; background: #a7bfcd; border-right: 1px solid #f5fafd; flex: none; }
.pick { position: relative; width: 117px; height: 22px; margin-top: 1px; }
.pick select { appearance: none; width: 100%; height: 100%; padding: 0 3px; background: #e1e1e1; border: 1px solid #adadad; }
.pick svg { position: absolute; right: 6px; top: 8px; pointer-events: none; }
.pick.off select { background: #ccc; border-color: #bfbfbf; opacity: 1; }
.combo .pick { margin-left: -1px; }

.tabs { display: flex; gap: 1px; height: 31px; padding-top: 4px; border-bottom: 1px solid #7ba9c4; flex: none; }
.tab { position: relative; isolation: isolate; display: flex; align-items: center; gap: 3px; padding: 0 11px 0 11px; height: 27px; --c: polygon(0 100%, 0 10px, 10px 0, 100% 0, 100% 100%); --b: #c9c9c9; --f: linear-gradient(#ececec, #dedede); }
.tab::before, .tab::after { content: ""; position: absolute; inset: 0; z-index: -2; clip-path: var(--c); background: var(--b); }
.tab::after { inset: 1px 1px 0; z-index: -1; background: var(--f); }
.tab.on { width: 147px; padding: 0 12px 0 21px; --c: polygon(0 100%, 19px 0, 100% 0, 100% 100%); --b: #7ba9c4; --f: linear-gradient(#f3fafd, #d3e8f3); color: #0d2f4e; }
.tab.on .name { font-weight: 500; }
.tab .x { margin-left: auto; }
.tab:not(.on) .x { margin-left: 8px; }

.work { display: flex; flex: 1 1 0; min-height: 0; padding: 5px 2px 1px 0; background: linear-gradient(#bcdcec 0 5px, transparent 5px); }
.modes { position: relative; display: flex; flex-direction: column; width: 36px; padding: 9px 1px 0 0; background: linear-gradient(90deg, #e9f5fa, #dcebf4 50%, #bbdaea); flex: none; }
.modes::before, .orient::before { content: ""; position: absolute; left: 2px; right: 2px; top: 3px; height: 1px; background: repeating-linear-gradient(90deg, #8da4b2 0 1px, transparent 1px 3px); }
.modes .tool { width: 34px; height: auto; }
.hsep { height: 2px; margin: 1px 1px 0 2px; background: #a7bfcd; border-bottom: 1px solid #f5fafd; flex: none; }
.orient { position: relative; display: flex; flex-direction: column; align-self: flex-start; width: 34px; height: 159px; margin: 0 2px 0 4px; padding-top: 9px; background: linear-gradient(90deg, #e9f5fa, #bbdaea); flex: none; }
.orient button { display: grid; place-items: center; height: 31px; width: 31px; flex: none; }
.orient input { width: 34px; height: 20px; padding: 0 2px; background: #fff; border: solid #555; border-width: 1px 0 0 1px; font-size: 12px; flex: none; }

.side { display: flex; flex-direction: column; gap: 3px; width: 263px; margin-right: 3px; flex: none; }
.preview { border: 1px solid #79858c; background: #e0e0d0; flex: none; }
.devices { flex: 1; display: flex; flex-direction: column; min-height: 0; border: 1px solid #2c6fa5; background: #fff; }
.dhead { display: flex; align-items: center; gap: 7px; height: 26px; padding: 0 3px; background: linear-gradient(#eef7fc, #c3deec); border-bottom: 1px solid #2c83c0; flex: none; }
.dhead button { width: 18px; height: 18px; border-radius: 3px; background: #0b4bdc; color: #fff; font: 16px/18px "Liberation Sans", sans-serif; }
.dhead h2 { flex: 1; margin-right: 74px; text-align: right; font-size: 13px; }
.devices ul { list-style: none; margin: 0; padding: 0; }
.devices li button { display: block; width: 100%; height: 16px; padding: 0 2px; text-align: left; }
.devices li .on { background: #0078d7; color: #fff; }

.canvas { flex: 1; min-width: 0; border: 1px solid #6f8088; background: #dfdfcf; overflow: hidden; }
.canvas text { font: 16px "Liberation Sans", sans-serif; fill: #111; }

.status { display: flex; height: 35px; border-bottom: 2px solid #2c4a60; background: linear-gradient(#edf7fc, #d9eaf4 50%, #b3d7ea); flex: none; white-space: nowrap; }
.status > div { position: relative; display: flex; align-items: center; }
.status > div::before { content: ""; position: absolute; left: 3px; top: 3px; bottom: 3px; width: 1px; background: repeating-linear-gradient(#8da4b2 0 1px, transparent 1px 3px); }
.run { width: 302px; padding-left: 8px; border-right: 2px solid #f3f9fc; color: #8d8d8d; }
.run button { display: grid; place-items: center; width: 41px; height: 32px; }
.run .sep { margin: 0 10px 0 1px; }
.run span { margin-left: 6px; }
.msg { width: 328px; padding-left: 9px; border-right: 3px solid #e6f1f7; font-size: 12px; }
.coords { flex: 1; min-width: 0; justify-content: flex-end; padding-right: 2px; }
.coords span:first-child { margin-right: 379px; }
.coords b { margin-left: 20px; font-weight: 400; color: #1414a0; }

.mark { position: absolute; right: 23px; bottom: 22px; font: 18px/24px "Noto Sans CJK SC", sans-serif; color: rgba(110, 115, 112, .65); text-shadow: 0 0 1px #fff; }

.dialog { position: absolute; left: 463px; top: 205px; width: 568px; background: #f0f0f0; border: 1px solid #2b88c4; border-top: 0; box-shadow: 2px 4px 12px rgba(0, 0, 0, .4); }
.dtitle { display: flex; align-items: center; height: 29px; padding: 0 5px 0 3px; background: #0078d7; color: #fff; }
.dtitle h2 { flex: 1; margin-left: 5px; font: 14px/20px "Noto Sans CJK SC", sans-serif; }
.dtitle button { display: grid; place-items: center; width: 45px; height: 29px; font: 16px/29px "Open Sans", sans-serif; }
.dtitle button:first-of-type { width: 20px; margin-right: 23px; }
.dbody { display: flex; padding: 16px 9px 9px; }
.fields { width: 452px; padding-right: 10px; border-right: 2px solid #6a6a6a; }
.grid { display: grid; grid-template-columns: 139px 205px 1fr; row-gap: 4px; grid-auto-rows: 24px; align-items: center; }
.grid > input, .hot > input { width: 100%; height: 24px; padding: 0 3px 3px; background: #fff; border: 1px solid #8a8a8a; }
.hot > input.focus { border-color: #3a93dc; }
.hot { position: relative; }
.caret { position: absolute; left: 18px; top: 4px; width: 1px; height: 15px; background: #000; }
.hide { display: flex; justify-content: space-between; align-items: center; padding-left: 32px; margin-right: -1px; }
input[type="checkbox"] { appearance: none; width: 16px; height: 16px; background: #fff; border: 1px solid #444; flex: none; }
input[type="checkbox"]:disabled { border-color: #d5d5d5; }
.pair { display: flex; gap: 11px; }
.pair .pick { width: 141px; margin: 0; }
.push { height: 26px; background: #e1e1e1; border: 1px solid #b4b4b4; text-align: center; font: 13px/20px "Liberation Sans", "Noto Sans CJK SC", sans-serif; white-space: nowrap; }
.pair .push { width: 52px; height: 22px; }
.olabel { display: block; margin: 8px 0 3px; }
.memo { display: flex; height: 196px; margin-left: -1px; border: 1px solid #828790; background: #fff; }
.memo textarea { flex: 1; resize: none; padding: 4px; }
.scroll { display: flex; flex-direction: column; justify-content: space-between; width: 21px; background: #f3f3f3; }
.scroll button { display: grid; place-items: center; height: 23px; }
.flags { display: grid; grid-template-columns: 240px 1fr; grid-auto-rows: 19px; margin: 8px -10px 0 -1px; }
.flags label { display: flex; align-items: center; gap: 2px; white-space: nowrap; }
.flags .off { color: #8b8b8b; }
.actions { flex: 1; display: flex; flex-direction: column; gap: 7px; padding: 1px 0 0 7px; }
.ok { position: relative; display: flex; margin-bottom: -3px; }
.ok .push { flex: 1; }
.default { border: 2px solid #0078d7; }
.box { position: absolute; border: 3px solid #f0101a; pointer-events: none; }
.hot .box { left: -3px; top: -6px; width: 64px; height: 31px; }
.ok .box { left: -7px; top: -8px; right: -10px; height: 37px; }
.badge { position: absolute; width: 26px; height: 26px; border: 3px solid #fff; border-radius: 50%; background: #0b0bf5; color: #fff; font: bold 15px/20px "Liberation Sans", sans-serif; text-align: center; box-shadow: 1px 1px 3px rgba(0, 0, 0, .7); }
.hot .badge { left: 67px; top: -5px; }
.ok .badge { left: 34px; top: -33px; }
</style>
